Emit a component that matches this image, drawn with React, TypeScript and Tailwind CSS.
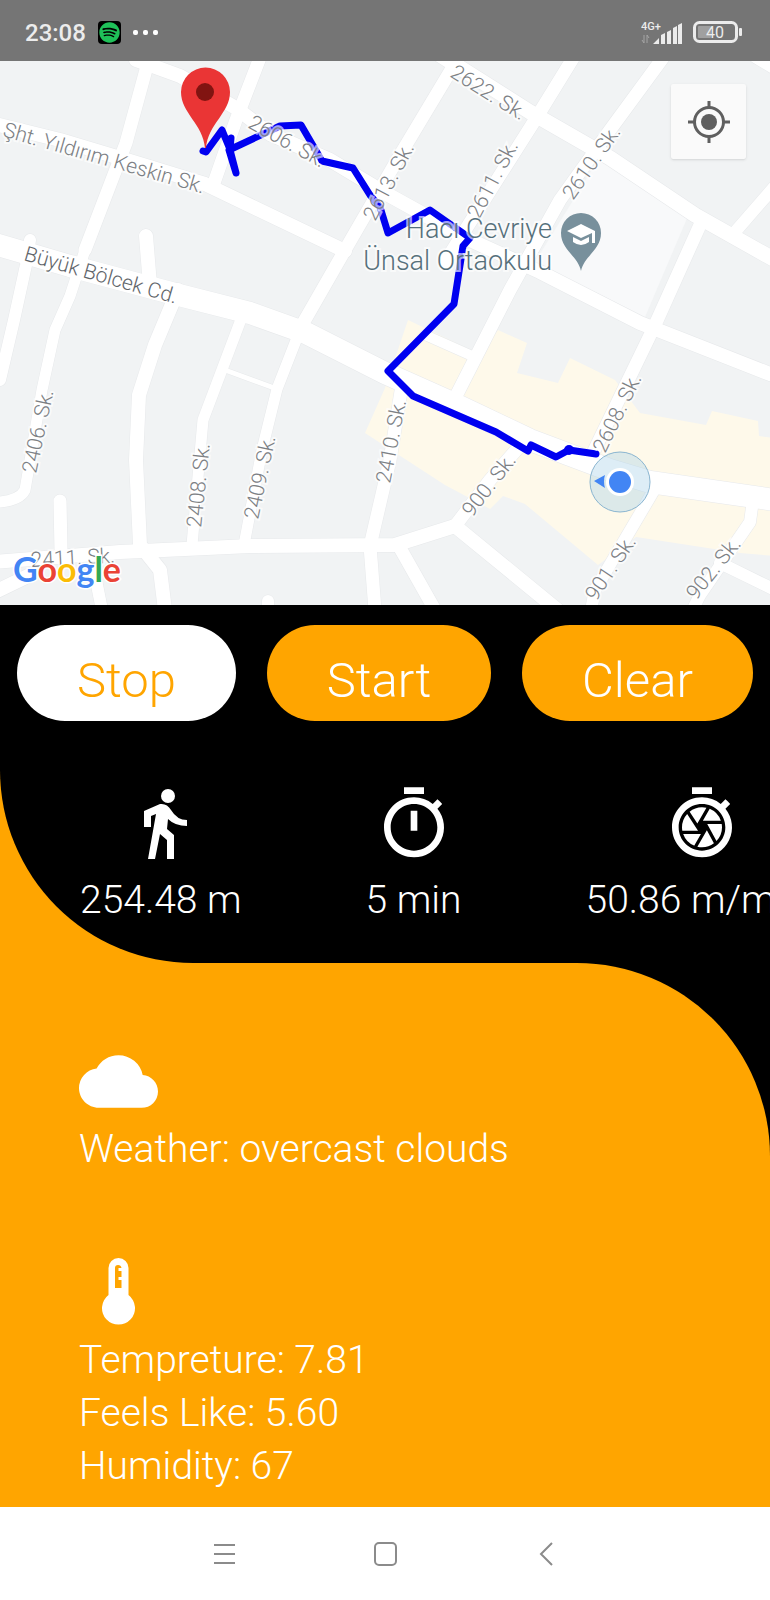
import { MdOutlineTimer, MdShutterSpeed, MdCloud } from "react-icons/md";
import { FaSpotify } from "react-icons/fa";
import type { ReactNode } from "react";

const roads: { d: string; w: number }[] = [
  { d: "M136 60 L180 76 L236 108 L270 134 L330 160 L385 193 L470 240 L540 272 L640 323 L770 374", w: 14 },
  { d: "M-5 124 L60 140 L120 158 L205 184 L345 251", w: 14 },
  { d: "M-5 244 L70 266 L175 294 L250 313 L306 333 L385 373 L450 402 L530 440 L610 470 L650 482 L775 500", w: 22 },
  { d: "M150 55 L126 143 L85 250", w: 13 },
  { d: "M85 250 L70 296 L55 330 L42 390 L25 490 Q20 500 0 502", w: 11 },
  { d: "M261 55 L236 120 L214 183", w: 13 },
  { d: "M460 55 L400 155 L345 250 L302 325", w: 13 },
  { d: "M302 325 L277 389 L262 450 L244 545", w: 11 },
  { d: "M575 55 L535 120 L445 262", w: 13 },
  { d: "M665 55 L610 130 L560 200 L510 290 L454 400", w: 13 },
  { d: "M440 55 L530 112 L610 158 L695 215 L775 260", w: 15 },
  { d: "M700 225 L655 325 L592 455", w: 13 },
  { d: "M735 232 L775 186", w: 12 },
  { d: "M755 58 L775 70", w: 10 },
  { d: "M30 240 L26 265 L14 320 L0 380", w: 12 },
  { d: "M146 236 L150 285", w: 14 },
  { d: "M178 290 L155 345 L139 395 L136 460 L140 545 L160 570 L165 610", w: 14 },
  { d: "M240 322 L203 420 L192 545", w: 11 },
  { d: "M225 370 L277 389", w: 5 },
  { d: "M-5 562 L120 552 L250 546 L395 545 L455 526 L560 612", w: 14 },
  { d: "M60 501 L61 550", w: 13 },
  { d: "M-5 592 L30 575", w: 14 },
  { d: "M94 570 L102 610", w: 12 },
  { d: "M268 601 L268 615", w: 12 },
  { d: "M402 385 L390 460 L370 546 L375 610", w: 13 },
  { d: "M400 548 L435 610", w: 13 },
  { d: "M455 526 L490 480 L525 440", w: 13 },
  { d: "M425 335 L470 355", w: 10 },
  { d: "M660 480 L595 590 L590 615", w: 12 },
  { d: "M753 500 L750 522 L700 595 L690 615", w: 12 },
  { d: "M720 563 L775 590", w: 12 },
];

const streets: { t: string; x: number; y: number; r: number; dark?: boolean }[] = [
  { t: "Şht. Yıldırım Keskin Sk.", x: 2, y: 136, r: 16 },
  { t: "Büyük Bölcek Cd.", x: 23, y: 260, r: 16, dark: true },
  { t: "2606. Sk.", x: 247, y: 127, r: 29 },
  { t: "2622. Sk.", x: 449, y: 76, r: 32 },
  { t: "2613. Sk.", x: 375, y: 222, r: -62 },
  { t: "2611. Sk.", x: 479, y: 220, r: -62 },
  { t: "2610. Sk.", x: 573, y: 201, r: -55 },
  { t: "2406. Sk.", x: 36, y: 474, r: -78 },
  { t: "2408. Sk.", x: 201, y: 528, r: -84 },
  { t: "2409. Sk.", x: 258, y: 520, r: -78 },
  { t: "2410. Sk.", x: 390, y: 484, r: -79 },
  { t: "2608. Sk.", x: 605, y: 454, r: -64 },
  { t: "900. Sk.", x: 472, y: 518, r: -52 },
  { t: "901. Sk.", x: 596, y: 602, r: -56 },
  { t: "902. Sk.", x: 696, y: 601, r: -51 },
  { t: "2411. Sk.", x: 31, y: 567, r: -3 },
];

function StreetMap() {
  return (
    <svg viewBox="0 61 770 544" preserveAspectRatio="xMidYMid slice" className="block h-full w-full" role="img" aria-label="Street map with walked route">
      <rect x="-10" y="50" width="800" height="570" fill="#f1f3f4" />
      <path d="M598 160 L688 216 L645 317 L535 262 Z" fill="#f8f9fa" />
      <path
        d="M408 320 L475 352 L498 330 L527 343 L517 373 L558 383 L570 358 L615 380 L640 413 L706 425 L712 411 L758 421 L759 436 L775 438 L775 556 L740 553 L636 537 L598 565 L525 504 L503 496 L490 509 L445 485 L365 433 L385 388 Z"
        fill="#fef9ea"
      />
      <g fill="none" strokeLinecap="round" strokeLinejoin="round">
        {roads.map((r) => (
          <path key={"edge" + r.d} d={r.d} stroke="#e7e9eb" strokeWidth={r.w + 1} />
        ))}
        {roads.map((r) => (
          <path key={r.d} d={r.d} stroke="#ffffff" strokeWidth={r.w} />
        ))}
        <path
          d="M203 151 L206 152 L222 130 L229 147 L231 138 L230 150 L236 173 L232 160 L229 150 L280 126 L301 125 L322 161 L353 168 L370 195 L380 207 L388 233 L430 210 L470 238 L463 246 L454 304 L388 371 L413 396 L496 432 L528 451 L531 445 L556 457 L569 450 L596 454"
          stroke="#0000f0"
          strokeWidth="7"
        />
      </g>
      <circle cx="569" cy="450" r="5" fill="#0000f0" />
      <g fontFamily="Roboto, sans-serif" fontWeight="300" fontSize="21" stroke="#ffffff" strokeOpacity="0.65" strokeWidth="4" paintOrder="stroke">
        {streets.map((s) => (
          <text key={s.t} transform={`translate(${s.x} ${s.y}) rotate(${s.r})`} fill={s.dark ? "#5f656a" : "#7c8084"}>
            {s.t}
          </text>
        ))}
        <g fill="#56707b" fontSize="27" textAnchor="end">
          <text x="552" y="238">Hacı Cevriye</text>
          <text x="552" y="270">Ünsal Ortaokulu</text>
        </g>
      </g>
      <path d="M581 271 C578 256 561 250 561 233 A20 20 0 0 1 601 233 C601 250 584 256 581 271 Z" fill="#78909c" />
      <path d="M567 231 L581 224 L595 231 V243 H592 V233 L581 238 Z M573 237 L581 241 L589 237 V242 Q581 248 573 242 Z" fill="#ffffff" />
      <path d="M205 148 C203 124 181 113 181 92 A24 24 0 0 1 230 92 C230 113 208 124 206 148 Z" fill="#ea3535" />
      <circle cx="205" cy="92" r="9" fill="#811411" />
      <circle cx="620" cy="482" r="30" fill="#a9d3e8" fillOpacity="0.4" stroke="#8ab5d0" strokeWidth="1" />
      <circle cx="620" cy="482" r="14" fill="#ffffff" />
      <circle cx="620" cy="482" r="11" fill="#4285f4" />
      <path d="M594 481 L605 475 Q603 481 605 488 Z" fill="#4285f4" />
      <text x="13" y="582" fontFamily="Lato, sans-serif" fontWeight="700" fontSize="34" stroke="#ffffff" strokeWidth="3" paintOrder="stroke">
        <tspan fill="#4285f4">G</tspan>
        <tspan fill="#ea4335">o</tspan>
        <tspan fill="#fbbc05">o</tspan>
        <tspan fill="#4285f4">g</tspan>
        <tspan fill="#34a853">l</tspan>
        <tspan fill="#ea4335">e</tspan>
      </text>
    </svg>
  );
}

function StatusBar() {
  return (
    <header className="flex h-[61px] shrink-0 items-center justify-between bg-[#757575] pl-[25px] pr-7 pt-1 text-[#ececec]">
      <div className="flex items-center gap-3">
        <span className="text-2xl font-medium">23:08</span>
        <span className="rounded-sm bg-black p-px text-[#1fc159]">
          <FaSpotify size={21} />
        </span>
        <span className="flex gap-[5px]">
          <i className="size-[5px] rounded-xs bg-white" />
          <i className="size-[5px] rounded-xs bg-white" />
          <i className="size-[5px] rounded-xs bg-white" />
        </span>
      </div>
      <div className="flex items-center gap-2.5">
        <svg width="42" height="24" viewBox="0 0 42 24" fill="#ececec" role="img" aria-label="Mobile signal">
          <text x="0" y="9" fontFamily="Roboto, sans-serif" fontWeight="500" fontSize="11">4G+</text>
          <path d="M12 23 L18 17 V23 Z M20 14 l4 -2 v11 h-4 Z M26 11 l4 -2 v14 h-4 Z M32 7 l4 -2 v18 h-4 Z M37 4 l4 -2 v21 h-4 Z" />
          <path d="M3 14 V22 L1 19 M6 22 V14 L8 17" fill="none" stroke="#a5a5a5" />
        </svg>
        <svg width="49" height="23" viewBox="0 0 49 23" role="img" aria-label="Battery 40 percent">
          <rect x="1.5" y="1.5" width="42" height="19" rx="5" fill="none" stroke="#ececec" strokeWidth="3" />
          <rect x="5" y="5" width="13" height="12" rx="1" fill="#a0a0a0" />
          <rect x="46" y="7" width="3" height="8" rx="1" fill="#ececec" />
          <text x="22" y="17" textAnchor="middle" fontFamily="Roboto, sans-serif" fontSize="16" fill="#ececec">40</text>
        </svg>
      </div>
    </header>
  );
}

function PillButton({ children, active }: { children: ReactNode; active?: boolean }) {
  return (
    <button
      type="button"
      className={
        active
          ? "h-24 rounded-full bg-white px-[60px] pt-3.5 text-[49px] leading-none font-light text-[#ffa500]"
          : "h-24 rounded-full bg-[#ffa500] px-[60px] pt-3.5 text-[49px] leading-none font-light text-white"
      }
    >
      {children}
    </button>
  );
}

function Stat({ icon, children }: { icon: ReactNode; children: ReactNode }) {
  return (
    <div className="flex shrink-0 flex-col items-center">
      {icon}
      <p className="mt-2.5 text-[39px] leading-[53px] font-light whitespace-nowrap">{children}</p>
    </div>
  );
}

function Walker() {
  return (
    <svg width="80" height="80" viewBox="0 0 80 80" fill="currentColor" aria-hidden="true">
      <circle cx="47" cy="12" r="7" />
      <path d="M23 27 L39 20 Q46 19 50 26 Q56 36 66 36 V42 Q54 42 47 35 L46 45 L53 51 V75 H46 V56 L39 50 L34 75 H27 L35 30 L30 32 V43 H23 Z" />
    </svg>
  );
}

function Thermometer() {
  return (
    <svg width="79" height="80" viewBox="0 0 79 80" fill="currentColor" aria-hidden="true">
      <path
        fillRule="evenodd"
        d="M29.5 16 A10 10 0 0 1 49.5 16 V43 A16.5 16.5 0 1 1 29.5 43 Z M36 36 V16 Q36 13 39 13 Q42 13 42.5 16 H39.5 V19 H42.5 V25 H39.5 V28 H42.5 V36 Z"
      />
    </svg>
  );
}

export default function App() {
  return (
    <div className="flex min-h-screen flex-col overflow-x-hidden bg-black font-['Roboto',sans-serif] text-white">
      <StatusBar />
      <section className="relative h-[544px] shrink-0 overflow-hidden">
        <StreetMap />
        <button type="button" aria-label="My location" className="absolute top-[23px] right-6 flex size-[75px] items-center justify-center rounded-xs bg-[#fafafa] shadow">
          <svg width="42" height="42" viewBox="0 0 42 42" fill="none" stroke="#5f5f5f" strokeWidth="3" aria-hidden="true">
            <circle cx="21" cy="21" r="14.5" />
            <circle cx="21" cy="21" r="8" fill="#5f5f5f" stroke="none" />
            <path d="M21 0 V6 M21 36 V42 M0 21 H6 M36 21 H42" />
          </svg>
        </button>
      </section>
      <main className="flex grow flex-col">
        <div className="bg-[#ffa500]">
          <section className="rounded-bl-[193px] bg-black pb-9">
            <div className="flex justify-between px-[17px] pt-5">
              <PillButton active>Stop</PillButton>
              <PillButton>Start</PillButton>
              <PillButton>Clear</PillButton>
            </div>
            <div className="mt-[63px] flex gap-[124px] pl-20">
              <Stat icon={<Walker />}>254.48 m</Stat>
              <Stat icon={<MdOutlineTimer size={80} />}>5 min</Stat>
              <Stat icon={<MdShutterSpeed size={80} />}>
                <span className="pr-3">50.86 m/min</span>
              </Stat>
            </div>
          </section>
        </div>
        <section className="grow rounded-tr-[193px] bg-[#ffa500] px-[79px] pt-[79px] text-[39px] leading-[53px] font-light">
          <MdCloud size={79} />
          <p className="mt-0.5">Weather: overcast clouds</p>
          <div className="mt-[76px]">
            <Thermometer />
            <p className="mt-0.5">Tempreture: 7.81</p>
            <p>Feels Like: 5.60</p>
            <p>Humidity: 67</p>
          </div>
        </section>
      </main>
      <nav className="flex h-[93px] shrink-0 items-center justify-center gap-[137px] bg-white text-[#8b8b8b]">
        <button type="button" aria-label="Recent apps">
          <svg width="24" height="24" viewBox="0 0 24 24" fill="none" stroke="currentColor" strokeWidth="2"><path d="M2 3 H23 M2 12 H23 M2 21 H23" /></svg>
        </button>
        <button type="button" aria-label="Home">
          <svg width="24" height="24" viewBox="0 0 24 24" fill="none" stroke="currentColor" strokeWidth="2"><rect x="2" y="1" width="21" height="22" rx="4" /></svg>
        </button>
        <button type="button" aria-label="Back">
          <svg width="24" height="24" viewBox="0 0 24 24" fill="none" stroke="currentColor" strokeWidth="2"><path d="M18 1 L7 12 L18 23" /></svg>
        </button>
      </nav>
    </div>
  );
}
